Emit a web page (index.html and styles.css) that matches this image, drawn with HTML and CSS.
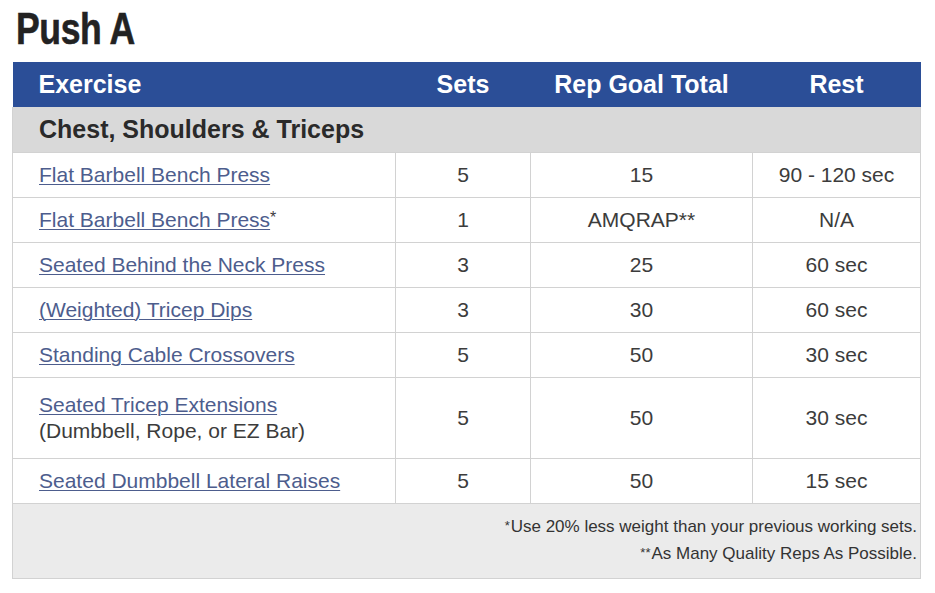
FILE: index.html
```html
<!DOCTYPE html>
<html lang="en">
<head>
<meta charset="utf-8">
<title>Push A</title>
<link rel="stylesheet" href="styles.css">
</head>
<body>
<h1 class="title"><span class="title-text">Push A</span></h1>
<table class="plan">
  <colgroup>
    <col class="c-ex"><col class="c-sets"><col class="c-rep"><col class="c-rest">
  </colgroup>
  <thead>
    <tr class="head">
      <th class="left">Exercise</th>
      <th>Sets</th>
      <th>Rep Goal Total</th>
      <th>Rest</th>
    </tr>
  </thead>
  <tbody>
    <tr class="section"><td colspan="4">Chest, Shoulders &amp; Triceps</td></tr>
    <tr><td class="left"><a href="#">Flat Barbell Bench Press</a></td><td>5</td><td>15</td><td>90 - 120 sec</td></tr>
    <tr><td class="left"><a href="#">Flat Barbell Bench Press</a><span class="ast">*</span></td><td>1</td><td>AMQRAP**</td><td>N/A</td></tr>
    <tr><td class="left"><a href="#">Seated Behind the Neck Press</a></td><td>3</td><td>25</td><td>60 sec</td></tr>
    <tr><td class="left"><a href="#">(Weighted) Tricep Dips</a></td><td>3</td><td>30</td><td>60 sec</td></tr>
    <tr><td class="left"><a href="#">Standing Cable Crossovers</a></td><td>5</td><td>50</td><td>30 sec</td></tr>
    <tr class="tall"><td class="left"><a href="#">Seated Tricep Extensions</a><br>(Dumbbell, Rope, or EZ Bar)</td><td>5</td><td>50</td><td>30 sec</td></tr>
    <tr><td class="left"><a href="#">Seated Dumbbell Lateral Raises</a></td><td>5</td><td>50</td><td>15 sec</td></tr>
    <tr class="notes"><td colspan="4">
      <p><span class="fn">*</span>Use 20% less weight than your previous working sets.</p>
      <p><span class="fn">**</span>As Many Quality Reps As Possible.</p>
    </td></tr>
  </tbody>
</table>
</body>
</html>
```

FILE: styles.css
```css
html, body {
  margin: 0;
  padding: 0;
  background: #fff;
}
body {
  padding: 0 0 0 12px;
  font-family: "Liberation Sans", Arial, sans-serif;
  color: #333;
}
.title {
  margin: 0;
  padding: 4px 0 0 4px;
  height: 62px;
  box-sizing: border-box;
  font-family: "Liberation Sans", Arial, sans-serif;
  font-weight: bold;
  font-size: 45px;
  line-height: 50px;
  color: #222;
}
.title-text {
  display: inline-block;
  transform: scaleX(0.79);
  transform-origin: left center;
  letter-spacing: -0.5px;
  -webkit-text-stroke: 0.6px #222;
}
.plan {
  border-collapse: collapse;
  width: 908px;
  table-layout: fixed;
}
.c-ex { width: 383px; }
.c-sets { width: 135px; }
.c-rep { width: 222px; }
.c-rest { width: 168px; }

.plan td, .plan th {
  text-align: center;
  vertical-align: middle;
  padding: 0;
}
.plan .left { text-align: left; padding-left: 26px; }

.head th {
  background: #2b4e97;
  color: #fff;
  font-size: 25px;
  font-weight: bold;
  height: 45px;
}
.section td {
  background: #d9d9d9;
  font-size: 25px;
  font-weight: bold;
  color: #2a2a2a;
  text-align: left;
  padding-left: 26px;
  height: 45px;
}
tbody tr td {
  border: 1px solid #d2d2d2;
  height: 44px;
  font-size: 21px;
  color: #3c3c3c;
}
.section td { border-top: none; border-bottom: 1px solid #d2d2d2; }
tbody tr.tall td { height: 80px; line-height: 26px; }
.plan a {
  color: #4d5d8d;
  text-decoration: underline;
  text-decoration-thickness: 1px;
  text-underline-offset: 2px;
}
.ast { font-size: 16px; vertical-align: 4px; }
.notes td {
  background: #ebebeb;
  text-align: right;
  padding: 9px 3px 11px 0;
  height: auto;
  border-color: #d2d2d2;
}
.notes p {
  margin: 0;
  font-size: 17px;
  line-height: 26px;
  color: #333;
}
.fn { font-size: 13px; vertical-align: 2px; margin-right: 1px; }
```
